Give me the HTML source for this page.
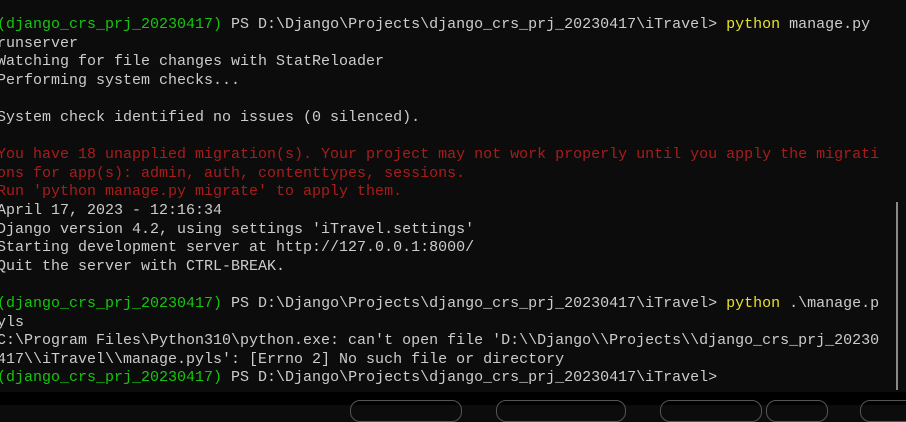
<!DOCTYPE html>
<html><head><meta charset="utf-8"><style>
html,body{margin:0;padding:0;width:906px;height:405px;overflow:hidden;background:#0c0c0c;}
#t{position:absolute;left:-3px;top:16px;font-family:"Liberation Mono","DejaVu Sans Mono",monospace;font-size:15px;line-height:18.6px;color:#cccccc;white-space:pre;}
.g{color:#16c60c}.y{color:#e6e22a}.r{color:#a81d1b}
#sb{position:absolute;left:896px;top:202px;width:2px;height:188px;background:#8a8a8a}
#bar{position:absolute;left:0;top:392px;width:906px;height:13px;background:#000}
.p{position:absolute;top:400px;height:20px;border:1px solid #555;border-radius:10px}
</style></head><body>
<div id="t"><span class="g">(django_crs_prj_20230417)</span> PS D:\Django\Projects\django_crs_prj_20230417\iTravel&gt; <span class="y">python</span> manage.py
runserver
Watching for file changes with StatReloader
Performing system checks...

System check identified no issues (0 silenced).

<span class="r">You have 18 unapplied migration(s). Your project may not work properly until you apply the migrati
ons for app(s): admin, auth, contenttypes, sessions.
Run 'python manage.py migrate' to apply them.</span>
April 17, 2023 - 12:16:34
Django version 4.2, using settings 'iTravel.settings'
Starting development server at http://127.0.0.1:8000/
Quit the server with CTRL-BREAK.

<span class="g">(django_crs_prj_20230417)</span> PS D:\Django\Projects\django_crs_prj_20230417\iTravel&gt; <span class="y">python</span> .\manage.p
yls
C:\Program Files\Python310\python.exe: can't open file 'D:\\Django\\Projects\\django_crs_prj_20230
417\\iTravel\\manage.pyls': [Errno 2] No such file or directory
<span class="g">(django_crs_prj_20230417)</span> PS D:\Django\Projects\django_crs_prj_20230417\iTravel&gt;</div>
<div id="sb"></div>
<div id="bar"></div>
<div class="p" style="left:350px;width:110px"></div>
<div class="p" style="left:496px;width:128px"></div>
<div class="p" style="left:660px;width:100px"></div>
<div class="p" style="left:766px;width:60px"></div>
<div class="p" style="left:860px;width:60px"></div>
</body></html>
